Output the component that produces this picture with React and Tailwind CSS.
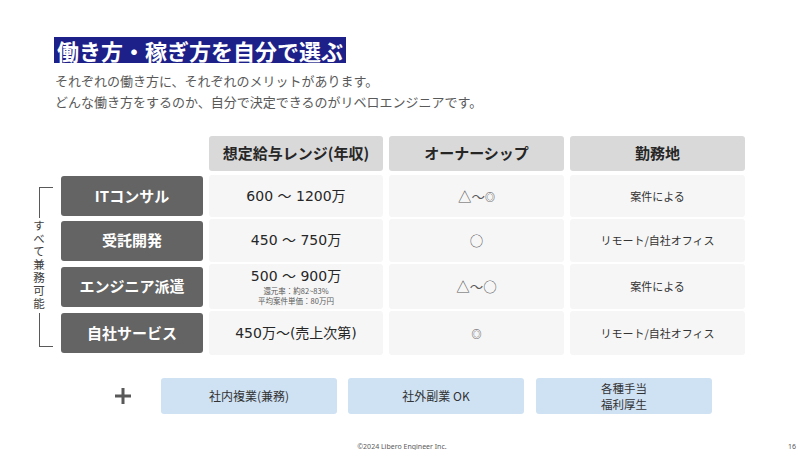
export default function App() {
  const rows = [
    { label: "ITコンサル", h: "h-[42px]", salary: <span>600 ～ 1200万</span>, own: <span>△～<span className="text-[10px] align-[1px] text-[#404040]">◎</span></span>, place: "案件による" },
    { label: "受託開発", h: "h-[43px]", salary: <span>450 ～ 750万</span>, own: <span>○</span>, place: "リモート/自社オフィス" },
    { label: "エンジニア派遣", h: "h-[45px]", salary: (
      <div className="flex flex-col items-center">
        <span className="leading-[17px]">500 ～ 900万</span>
        <span className="font-['Noto_Sans_CJK_JP',sans-serif] text-[7.5px] leading-[10px] text-[#595959] mt-[1px]">還元率：約82~83%</span>
        <span className="font-['Noto_Sans_CJK_JP',sans-serif] text-[7.5px] leading-[10px] text-[#595959]">平均案件単価：80万円</span>
      </div>
    ), own: <span>△～○</span>, place: "案件による" },
    { label: "自社サービス", h: "h-[44px]", salary: <span>450万～(売上次第)</span>, own: <span className="text-[10px] text-[#404040]">◎</span>, place: "リモート/自社オフィス" },
  ];
  return (
    <div className="w-[800px] h-[450px] bg-white overflow-hidden flex flex-col pt-[37px] font-['Noto_Sans_CJK_JP',sans-serif] text-[#262626]">
      <div className="pl-[54px] flex">
        <span className="bg-[#1d2088] text-white font-bold text-[22px] leading-[26px] px-[3px]">働き方・稼ぎ方を自分で選ぶ</span>
      </div>
      <div className="pl-[55px] mt-[7px] text-[13px] leading-[21px] text-[#595959]">
        <div>それぞれの働き方に、それぞれのメリットがあります。</div>
        <div>どんな働き方をするのか、自分で決定できるのがリベロエンジニアです。</div>
      </div>

      <div className="flex mt-[24px]">
        <div className="w-[28px] ml-[33px] flex flex-col pt-[51px]">
          <div className="ml-[6px] w-[14px] h-[31px] border-l border-t border-[#595959]" />
          <div className="w-[12px] h-[95px] flex justify-center items-center text-[11.5px] leading-[12px] tracking-[1.5px] text-[#404040] [writing-mode:vertical-rl]">
            すべて兼務可能
          </div>
          <div className="ml-[6px] w-[14px] h-[34px] border-l border-b border-[#595959]" />
        </div>

        <div className="flex flex-col">
          <div className="grid grid-cols-[142px_174px_175px_175px] gap-x-[6px] h-[35px]">
            <div />
            {["想定給与レンジ(年収)", "オーナーシップ", "勤務地"].map((t) => (
              <div key={t} className="bg-[#d9d9d9] rounded-[3px] flex items-center justify-center font-bold text-[15px] text-[#262626]">
                {t}
              </div>
            ))}
          </div>
          <div className="flex flex-col gap-y-[2px] mt-[4px]">
            {rows.map((r) => (
              <div key={r.label} className={`grid grid-cols-[142px_174px_175px_175px] gap-x-[6px] ${r.h}`}>
                <div className="self-center h-[40px] bg-[#646464] rounded-[3px] flex items-center justify-center text-white font-bold text-[15px]">
                  {r.label}
                </div>
                <div className="bg-[#f6f6f6] rounded-[3px] flex items-center justify-center text-[14px] text-[#262626] font-['DejaVu_Sans','Noto_Sans_CJK_JP',sans-serif]">
                  {r.salary}
                </div>
                <div className="bg-[#f6f6f6] rounded-[3px] flex items-center justify-center text-[13.5px] text-[#595959]">
                  {r.own}
                </div>
                <div className="bg-[#f6f6f6] rounded-[3px] flex items-center justify-center text-[11px] text-[#333333]">
                  {r.place}
                </div>
              </div>
            ))}
          </div>
        </div>
      </div>

      <div className="flex items-center pl-[115px] mt-[23px]">
        <svg width="16" height="16" viewBox="0 0 16 16">
          <rect x="6.5" y="0" width="3" height="16" fill="#595959" />
          <rect x="0" y="6.5" width="16" height="3" fill="#595959" />
        </svg>
        <div className="ml-[30px] w-[176px] h-[36px] bg-[#cfe2f3] rounded-[3px] flex items-center justify-center text-[12px] text-[#333333]">
          社内複業(兼務)
        </div>
        <div className="ml-[11px] w-[176px] h-[36px] bg-[#cfe2f3] rounded-[3px] flex items-center justify-center text-[12px] text-[#333333]">
          社外副業 OK
        </div>
        <div className="ml-[12px] w-[176px] h-[36px] bg-[#cfe2f3] rounded-[3px] flex items-center justify-center text-center text-[11.5px] leading-[16px] text-[#333333]">
          <p>各種手当<br />福利厚生</p>
        </div>
      </div>

      <div className="grid grid-cols-[1fr_auto_1fr] mt-[28px] text-[7px] leading-[10px] text-[#595959] font-['Noto_Sans',sans-serif]">
        <div />
        <div className="pl-[4px]">©2024 Libero Engineer Inc.</div>
        <div className="justify-self-end pr-[4px]">16</div>
      </div>
    </div>
  );
}
